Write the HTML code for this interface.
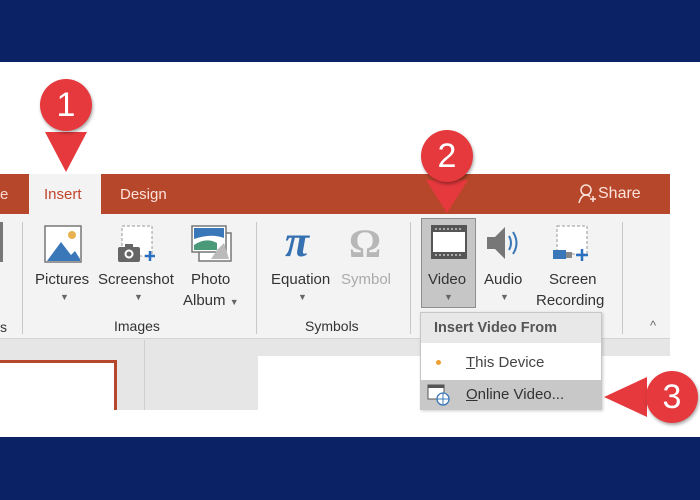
<!DOCTYPE html>
<html><head><style>
*{margin:0;padding:0;box-sizing:border-box}
body{width:700px;height:500px;position:relative;overflow:hidden;background:#fff;font-family:"Liberation Sans",sans-serif}
.a{position:absolute}
.t{position:absolute;font-size:15px;color:#333;white-space:nowrap}
.circ{position:absolute;width:52px;height:52px;border-radius:50%;background:#e5393d;color:#fff;font-size:34px;text-align:center;line-height:52px;box-shadow:1px 2px 3px rgba(0,0,0,.35)}
.sep{position:absolute;width:1px;background:#c8c8c8;top:222px;height:112px}
.dd{position:absolute;font-size:9px;color:#666}
</style></head><body>
<div class="a" style="left:0;top:0;width:700px;height:62px;background:#0b2264"></div>
<div class="a" style="left:0;top:437px;width:700px;height:63px;background:#0b2264"></div>
<div class="a" style="left:0;top:174px;width:670px;height:40px;background:#b7472a"></div>
<div class="t" style="left:0;top:186px;color:#f6d9d2">e</div>
<div class="a" style="left:29px;top:174px;width:72px;height:40px;background:#f3f3f3"></div>
<div class="t" style="left:44px;top:186px;color:#c2452b">Insert</div>
<div class="t" style="left:120px;top:186px;color:#fbe3dc">Design</div>
<div class="t" style="left:598px;top:185px;color:#fbe3dc;font-size:16px">Share</div>
<svg class="a" style="left:577px;top:183px" width="20" height="22"><circle cx="9" cy="7" r="5" fill="none" stroke="#fbe3dc" stroke-width="1.5"/><path d="M2 20 Q4 12 9 12 Q12 12 13 14 M13 16h6 M16 13v6" fill="none" stroke="#fbe3dc" stroke-width="1.5"/></svg>
<div class="a" style="left:0;top:214px;width:670px;height:124px;background:#f3f3f3"></div>
<div class="a" style="left:0;top:338px;width:670px;height:18px;background:#e6e6e6"></div>
<div class="a" style="left:0;top:338px;width:670px;height:1px;background:#d4d4d4"></div>
<div class="sep" style="left:22px"></div>
<div class="sep" style="left:256px"></div>
<div class="sep" style="left:410px"></div>
<div class="sep" style="left:622px"></div>
<div class="a" style="left:0;top:222px;width:3px;height:40px;background:#777"></div>
<div class="t" style="left:0;top:319px;font-size:14px">s</div>
<svg class="a" style="left:44px;top:225px" width="38" height="38"><rect x="1" y="1" width="36" height="36" fill="#fff" stroke="#777" stroke-width="1.5"/><circle cx="28" cy="10" r="4" fill="#e8b04e"/><path d="M3 36 L17 17 L27 30 L31 26 L36 34 L36 36Z" fill="#3a77b8"/></svg>
<div class="t" style="left:35px;top:271px">Pictures</div>
<div class="dd" style="left:60px;top:292px">▼</div>
<svg class="a" style="left:116px;top:225px" width="42" height="40"><rect x="6" y="1" width="30" height="30" fill="#fff" stroke="#999" stroke-dasharray="3 2"/><rect x="2" y="22" width="22" height="15" rx="2" fill="#666"/><rect x="9" y="19" width="8" height="4" fill="#666"/><circle cx="13" cy="29" r="4.5" fill="#fff"/><circle cx="13" cy="29" r="2.5" fill="#666"/><path d="M29 31h10 M34 26v10" stroke="#2a6fc0" stroke-width="2.5"/></svg>
<div class="t" style="left:98px;top:271px">Screenshot</div>
<div class="dd" style="left:134px;top:292px">▼</div>
<svg class="a" style="left:191px;top:225px" width="42" height="40"><rect x="8" y="8" width="32" height="28" fill="#fff" stroke="#777" stroke-width="1.5"/><rect x="1" y="1" width="34" height="26" fill="#fff" stroke="#777" stroke-width="1.5"/><path d="M3 3h30v10 Q20 8 3 14Z" fill="#3a77b8"/><path d="M3 20 Q15 12 26 18 L26 25 L3 25Z" fill="#4a9a7a"/><path d="M26 25 L33 18 L38 34 L20 34Z" fill="#bbb"/></svg>
<div class="t" style="left:191px;top:271px">Photo</div>
<div class="t" style="left:183px;top:292px">Album <span style="font-size:9px;color:#666">▼</span></div>
<div class="t" style="left:114px;top:318px;font-size:14px">Images</div>
<div class="t" style="left:285px;top:216px;font-size:44px;color:#3570b0;font-family:'Liberation Serif',serif;font-style:italic;font-weight:bold">π</div>
<div class="t" style="left:349px;top:220px;font-size:40px;color:#b7b7b7;font-family:'Liberation Serif',serif;font-weight:bold">Ω</div>
<div class="t" style="left:271px;top:271px">Equation</div>
<div class="t" style="left:341px;top:271px;color:#aaa">Symbol</div>
<div class="dd" style="left:298px;top:292px">▼</div>
<div class="t" style="left:305px;top:318px;font-size:14px">Symbols</div>
<div class="a" style="left:421px;top:218px;width:55px;height:90px;background:#c6c6c6;border:1px solid #8e8e8e"></div>
<svg class="a" style="left:431px;top:225px" width="36" height="34"><rect x="1" y="1" width="34" height="32" fill="#fff" stroke="#555" stroke-width="2"/><rect x="1" y="1" width="34" height="6" fill="#555"/><rect x="1" y="27" width="34" height="6" fill="#555"/><path d="M4 4h28 M4 30h28" stroke="#fff" stroke-dasharray="2 2"/></svg>
<div class="t" style="left:428px;top:271px">Video</div>
<div class="dd" style="left:444px;top:292px">▼</div>
<svg class="a" style="left:485px;top:225px" width="40" height="36"><path d="M2 12h8l10-10v32l-10-10h-8z" fill="#777"/><path d="M24 11 Q28 18 24 25 M28 7 Q35 18 28 29" fill="none" stroke="#3a77b8" stroke-width="2"/></svg>
<div class="t" style="left:484px;top:271px">Audio</div>
<div class="dd" style="left:500px;top:292px">▼</div>
<svg class="a" style="left:551px;top:225px" width="40" height="40"><rect x="6" y="1" width="30" height="28" fill="#fff" stroke="#999" stroke-dasharray="3 2"/><rect x="2" y="25" width="13" height="9" fill="#3a77b8"/><rect x="15" y="27" width="6" height="6" fill="#888"/><path d="M25 30h12 M31 24v12" stroke="#2a6fc0" stroke-width="2.5"/></svg>
<div class="t" style="left:549px;top:271px">Screen</div>
<div class="t" style="left:536px;top:292px">Recording</div>
<div class="t" style="left:650px;top:318px;font-size:13px;color:#666">^</div>
<div class="a" style="left:0;top:356px;width:258px;height:81px;background:#e6e6e6"></div>
<div class="a" style="left:144px;top:340px;width:1px;height:97px;background:#cfcfcf"></div>
<div class="a" style="left:258px;top:356px;width:162px;height:81px;background:#fff"></div>
<div class="a" style="left:0;top:360px;width:117px;height:60px;background:#fff;border-top:3px solid #b7472a;border-right:3px solid #b7472a"></div>
<div class="a" style="left:0;top:410px;width:258px;height:27px;background:#fff"></div>
<div class="a" style="left:420px;top:312px;width:182px;height:98px;background:#fff;border:1px solid #c6c6c6;box-shadow:1px 1px 3px rgba(0,0,0,.2)"></div>
<div class="a" style="left:421px;top:313px;width:180px;height:30px;background:#e8e8e8"></div>
<div class="t" style="left:434px;top:320px;font-weight:bold;color:#555;font-size:14.5px">Insert Video From</div>
<div class="a" style="left:436px;top:360px;width:5px;height:5px;border-radius:50%;background:#f0a030"></div>
<div class="t" style="left:466px;top:354px;color:#444"><u>T</u>his Device</div>
<div class="a" style="left:421px;top:380px;width:180px;height:30px;background:#c8c8c8"></div>
<svg class="a" style="left:427px;top:384px" width="24" height="22"><rect x="1" y="1" width="16" height="14" fill="#fff" stroke="#555"/><rect x="1" y="1" width="16" height="3" fill="#555"/><circle cx="16" cy="15" r="6" fill="#fff" stroke="#3a77b8" stroke-width="1.3"/><path d="M10 15h12 M16 9v12" stroke="#3a77b8"/></svg>
<div class="t" style="left:466px;top:386px;color:#333"><u>O</u>nline Video...</div>
<svg class="a" style="left:0;top:0" width="700" height="500"><path d="M45 132 L87 132 L66 172Z" fill="#e5393d"/><path d="M426 180 L468 180 L447 213Z" fill="#e5393d"/><path d="M647 377 L647 417 L604 397Z" fill="#e5393d"/></svg>
<div class="circ" style="left:40px;top:79px">1</div>
<div class="circ" style="left:421px;top:130px">2</div>
<div class="circ" style="left:646px;top:371px">3</div>
</body></html>
